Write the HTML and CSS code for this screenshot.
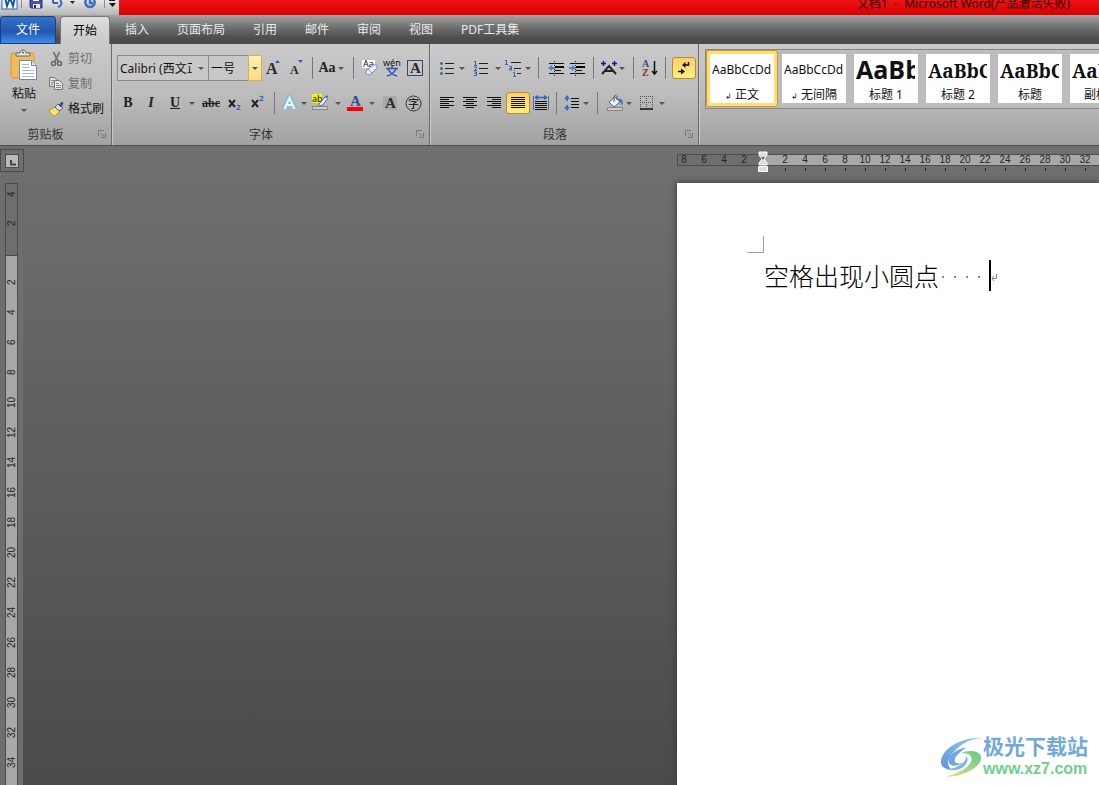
FILE: index.html
```html
<!DOCTYPE html>
<html lang="zh-CN">
<head>
<meta charset="utf-8">
<title>文档1 - Microsoft Word</title>
<link rel="stylesheet" href="styles.css">
</head>
<body>
<header class="titlebar">
  <div class="quick">
    <svg class="quick-icons" width="119" height="15" viewBox="0 0 119 15">
      <rect x="2" y="-6" width="15" height="15" fill="#f4f9ff" stroke="#2a6cb5"/>
      <path d="M5 -3l2 9 3-8 3 8 2-9" fill="none" stroke="#17599f" stroke-width="2"/>
      <path d="M21.500 0v8M104.500 0v8" stroke="#8b8b8b"/>
      <path d="M30 0h12v8H31l-1-1z" fill="#4c51b8" stroke="#2c3080"/>
      <path d="M33 0h6v1h-6z" fill="#fff"/><path d="M33 4h7v4h-7z" fill="#e6e9fa"/><path d="M34 5h2v3h-2z" fill="#20246a"/>
      <path d="M53 3h5M53 3v-3M60 0c3 3 1 6-2 7" fill="none" stroke="#3b67b8" stroke-width="2"/>
      <path d="M70 1h5l-2.500 3z" fill="#222"/>
      <path d="M86 0c-2 4 1 7 4 7s6-3 4-7M90 -1v4h3" fill="none" stroke="#3c6fc2" stroke-width="2.500"/>
      <path d="M109 .5h6" stroke="#111"/><path d="M109 3h7l-3.500 4z" fill="#111"/>
    </svg>
  </div>
  <div class="title">文档1 &nbsp;-&nbsp; Microsoft Word(产品激活失败)</div>
</header>

<nav class="tabs">
  <button class="tab file">文件</button>
  <button class="tab active">开始</button>
  <button class="tab">插入</button>
  <button class="tab">页面布局</button>
  <button class="tab">引用</button>
  <button class="tab">邮件</button>
  <button class="tab">审阅</button>
  <button class="tab">视图</button>
  <button class="tab">PDF工具集</button>
</nav>

<section class="ribbon">
  <div class="group clipboard">
    <div class="clip-body">
      <button class="paste">
        <svg width="28" height="32" viewBox="0 0 28 32">
          <rect x="1" y="3" width="23" height="25" rx="2" fill="#f0bb58" stroke="#d69a3a"/>
          <path d="M6 6V3h4c0-4 6-4 6 0h4v3z" fill="#e4e4e4" stroke="#666"/><circle cx="13" cy="2.500" r="1" fill="#555"/>
          <path d="M9.500 10.500h12l5 5v14h-17z" fill="#fff" stroke="#6d87b4"/><path d="M21.500 10.500v5h5" fill="#dbe6f7" stroke="#6d87b4"/>
          <path d="M12 14.500h7M12 17.500h7M12 20.500h12M12 23.500h12M12 26.500h12" stroke="#a9b3c4"/>
        </svg>
        <span>粘贴</span><i class="tri"></i>
      </button>
      <div class="clip-list">
        <button class="clip-item dim">
          <svg width="16" height="16" viewBox="0 0 16 16"><path d="M4.500 1l5 10M10.500 1l-5 10" stroke="#777" stroke-width="1.700"/><circle cx="4.500" cy="12.500" r="2" fill="none" stroke="#666" stroke-width="1.500"/><circle cx="10.500" cy="12.500" r="2" fill="none" stroke="#666" stroke-width="1.500"/></svg>
          <span>剪切</span></button>
        <button class="clip-item dim">
          <svg width="16" height="16" viewBox="0 0 16 16"><path d="M.5 1.500h5l2 2v7h-7z" fill="#ddd" stroke="#777"/><path d="M2 4.500h4M2 6.500h4M2 8.500h2" stroke="#888"/><path d="M5.500 4.500h5l3 3v6h-8z" fill="#e6e6e6" stroke="#777"/><path d="M7 7.500h3M7 9.500h5M7 11.500h5" stroke="#888"/></svg>
          <span>复制</span></button>
        <button class="clip-item">
          <svg width="16" height="16" viewBox="0 0 16 16"><path d="M0 9l6-3 5 4-5 5c-2 0-4-1-6-6z" fill="#f7d95a" stroke="#bb922a"/><path d="M2 10l5 3M4 8l5 4" stroke="#fff5ae"/><path d="M6 6l3-3 5 4-4 3z" fill="#d8d8e4" stroke="#666"/><path d="M10 4l3-3 1 1-2 4z" fill="#4d4f9f" stroke="#393b78"/></svg>
          <span>格式刷</span></button>
      </div>
    </div>
    <div class="caption"><span>剪贴板</span><svg class="launch" width="8" height="8" viewBox="0 0 8 8"><path d="M.5 6V.5H6M3 3l3 3M7.500 3v4.500H3" fill="none" stroke="#777"/></svg></div>
  </div>

  <div class="group font">
    <div class="row">
      <input class="combo name" aria-label="字体" value="Calibri (西文正文)"><button class="combo-arrow" aria-label="字体列表"><i class="tri"></i></button>
      <input class="combo size" aria-label="字号" value="一号"><button class="combo-arrow hot" aria-label="字号列表"><i class="tri"></i></button>
      <button class="tool w22" aria-label="增大字体"><svg width="16" height="18" viewBox="0 0 16 18"><text x="1" y="15" class="serif s16">A</text><path d="M10 4h5l-2.500-3z" fill="#2d5eb5"/></svg></button>
      <button class="tool w24" aria-label="缩小字体"><svg width="16" height="18" viewBox="0 0 16 18"><text x="2" y="15" class="serif s12">A</text><path d="M10 1h5l-2.500 3z" fill="#2d5eb5"/></svg></button>
      <i class="sep w8"></i>
      <button class="tool w22 letters">Aa</button><button class="tool w6" aria-label="更改大小写"><i class="tri"></i></button>
      <i class="sep w18"></i>
      <button class="tool w16" aria-label="清除格式"><svg width="16" height="18" viewBox="0 0 16 18"><rect x="0" y="1" width="13" height="8" fill="#fff"/><text x="1" y="8" class="sans s8">Aa</text><path d="M4 12l7-6c2-1 5 0 4 3l-6 6c-2 2-6 0-5-3z" fill="#e9effa" stroke="#6f86b6"/><path d="M6 10l4 4" stroke="#8ea4cc"/></svg></button>
      <button class="tool w28" aria-label="拼音指南"><svg width="18" height="18" viewBox="0 0 18 18"><text x="0" y="7" class="sans s8">wén</text><path d="M9 7v2M3 9.500h12M5 10c2 4 5 6 9 7M13 10c-2 4-5 6-9 7" fill="none" stroke="#2855b9" stroke-width="1.500"/></svg></button>
      <button class="tool w18" aria-label="字符边框"><svg width="17" height="18" viewBox="0 0 17 18"><rect x=".5" y="1.500" width="15" height="15" fill="#c6c6c6" stroke="#2d4a6d"/><text x="3" y="14" class="serif s15">A</text></svg></button>
    </div>
    <div class="row second">
      <button class="tool w22 letters bold">B</button>
      <button class="tool w24 letters italic">I</button>
      <button class="tool w24 letters under">U</button><button class="tool w10" aria-label="下划线选项"><i class="tri"></i></button>
      <button class="tool w28 letters strike">abc</button>
      <button class="tool w20" aria-label="下标"><svg width="16" height="16" viewBox="0 0 16 16"><path d="M2 5l6 7M8 5l-6 7" stroke="#222" stroke-width="2"/><text x="9" y="15" class="blue s7">2</text></svg></button>
      <button class="tool w24" aria-label="上标"><svg width="16" height="16" viewBox="0 0 16 16"><path d="M3 5l6 7M9 5l-6 7" stroke="#222" stroke-width="2"/><text x="10" y="6" class="blue s7">2</text></svg></button>
      <i class="sep w10"></i>
      <button class="tool w22" aria-label="文本效果"><svg width="18" height="18" viewBox="0 0 18 18"><path d="M3 15L8.500 3 14 15M5 11h7" fill="none" stroke="#79bde6" stroke-width="5" stroke-linejoin="round" opacity=".85"/><path d="M3.500 15L8.500 4l5 11M5 11h7" fill="none" stroke="#edf9ff" stroke-width="2"/></svg></button><button class="tool w6" aria-label="文本效果选项"><i class="tri"></i></button>
      <button class="tool w28" aria-label="突出显示"><svg width="18" height="18" viewBox="0 0 18 18"><rect x="0" y="0" width="10" height="9" fill="#f5f21b"/><text x="0" y="8" class="sans s8">ab</text><path d="M7 10l6-7 3 1-5 7-4 1z" fill="#dfe7f2" stroke="#5373a5"/><path d="M13 3l2-2 1 2z" fill="#3c5e9d"/><rect x=".5" y="12.500" width="15" height="3" fill="#ccc" stroke="#888"/></svg></button><button class="tool w6" aria-label="突出显示颜色"><i class="tri"></i></button>
      <button class="tool w28" aria-label="字体颜色"><svg width="18" height="18" viewBox="0 0 18 18"><text x="4" y="12" class="serif s15 navy">A</text><rect x="1" y="13" width="16" height="4" fill="#f00"/></svg></button><button class="tool w6" aria-label="字体颜色选项"><i class="tri"></i></button>
      <button class="tool w30" aria-label="字符底纹"><svg width="14" height="16" viewBox="0 0 14 16"><rect y="1" width="14" height="14" fill="#a9a9a9"/><text x="2" y="13" class="serif s15">A</text></svg></button>
      <button class="tool w16" aria-label="带圈字符"><svg width="17" height="17" viewBox="0 0 17 17"><circle cx="8.500" cy="8.500" r="7.500" fill="none" stroke="#333"/><text x="3" y="13" class="s11">字</text></svg></button>
    </div>
    <div class="caption"><span>字体</span><svg class="launch" width="8" height="8" viewBox="0 0 8 8"><path d="M.5 6V.5H6M3 3l3 3M7.500 3v4.500H3" fill="none" stroke="#777"/></svg></div>
  </div>

  <div class="group paragraph">
    <div class="row">
      <button class="tool w22" aria-label="项目符号"><svg width="16" height="16" viewBox="0 0 16 16"><path d="M6 3.500h9M6 8.500h9M6 13.500h9" stroke="#222"/><g fill="#5a7cbb" stroke="#244c94"><circle cx="2.500" cy="3.500" r="1"/><circle cx="2.500" cy="8.500" r="1"/><circle cx="2.500" cy="13.500" r="1"/></g></svg></button><button class="tool w8" aria-label="项目符号库"><i class="tri"></i></button>
      <button class="tool w30" aria-label="编号"><svg width="16" height="16" viewBox="0 0 16 16"><path d="M6 3.500h9M6 8.500h9M6 13.500h9" stroke="#222"/><path d="M1 1.500h1.500V6M1 5.500h3M1 7h2.500v1.500L1 10.500h3M1 12h2.500v3.500H1M2 13.500h1" fill="none" stroke="#2f62b5"/></svg></button><button class="tool w4" aria-label="编号库"><i class="tri"></i></button>
      <button class="tool w26" aria-label="多级列表"><svg width="18" height="18" viewBox="0 0 18 18"><path d="M7 3.500h10M10 9.500h7M13 14.500h4" stroke="#222"/><path d="M1 1.500h1.500V5M1 5.500h3M5 7.500h2.500V11H5.500V9.500H7M9 13.500h1.500V17M9 17.500h3M10 11.500h1" fill="none" stroke="#2f62b5"/></svg></button><button class="tool w4" aria-label="列表库"><i class="tri"></i></button>
      <i class="sep w16"></i>
      <button class="tool w20" aria-label="减少缩进"><svg width="16" height="16" viewBox="0 0 16 16"><path d="M1 3.500h15M7 10.500h6M1 13.500h15" stroke="#111"/><path d="M7 6h9v2H7z"/><path d="M6.500 1v15" stroke="#222" stroke-dasharray="1 1"/><path d="M0 8l4-3v2h3v2H4v2z" fill="#4f80d0"/></svg></button>
      <button class="tool w22" aria-label="增加缩进"><svg width="16" height="16" viewBox="0 0 16 16"><path d="M1 3.500h15M7 10.500h6M1 13.500h15" stroke="#111"/><path d="M7 6h9v2H7z"/><path d="M6.500 1v15" stroke="#222" stroke-dasharray="1 1"/><path d="M7 8L3 5v2H0v2h3v2z" fill="#4f80d0"/></svg></button>
      <i class="sep w10"></i>
      <button class="tool w22" aria-label="中文版式"><svg width="18" height="16" viewBox="0 0 18 16"><path d="M2 14L9 6l7 8M5 11h8" fill="none" stroke="#222" stroke-width="2"/><path d="M1 3.500h5M3.500 1v5M12 3.500h5M14.500 1v5" stroke="#15158e" stroke-width="1.500"/></svg></button><button class="tool w4" aria-label="版式选项"><i class="tri"></i></button>
      <i class="sep w18"></i>
      <button class="tool w16" aria-label="排序"><svg width="16" height="18" viewBox="0 0 16 18"><text x="0" y="8" class="serif s10 navy">A</text><text x="0" y="17" class="serif s10 wine">Z</text><path d="M12.500 2v13M10 12l2.500 3 2.500-3" fill="none" stroke="#111" stroke-width="1.500"/></svg></button>
      <i class="sep w14"></i>
      <button class="tool w24 on" aria-label="显示编辑标记"><svg width="16" height="16" viewBox="0 0 16 16"><path d="M12.500 2v3H9M2 11.500h4" fill="none" stroke="#111" stroke-width="1.500"/><path d="M9.500 2v6L6 5zM5 8.500v6l4-3z" fill="#111"/></svg></button>
    </div>
    <div class="row second">
      <button class="tool w22" aria-label="左对齐"><svg width="16" height="14" viewBox="0 0 16 14"><path d="M1 1.500h14M1 3.500h9M1 5.500h14M1 7.500h9M1 9.500h14M1 11.500h9" stroke="#111"/></svg></button>
      <button class="tool w24" aria-label="居中"><svg width="16" height="14" viewBox="0 0 16 14"><path d="M1 1.500h14M4 3.500h8M1 5.500h14M4 7.500h8M1 9.500h14M4 11.500h8" stroke="#111"/></svg></button>
      <button class="tool w24" aria-label="右对齐"><svg width="16" height="14" viewBox="0 0 16 14"><path d="M1 1.500h14M6 3.500h9M1 5.500h14M6 7.500h9M1 9.500h14M6 11.500h9" stroke="#111"/></svg></button>
      <button class="tool w24 on" aria-label="两端对齐"><svg width="16" height="14" viewBox="0 0 16 14"><path d="M1 1.500h14M1 3.500h14M1 5.500h14M1 7.500h14M1 9.500h14M1 11.500h14" stroke="#111"/></svg></button>
      <button class="tool w22" aria-label="分散对齐"><svg width="16" height="16" viewBox="0 0 16 16"><path d="M.5 1v14M15.500 1v14" stroke="#526b92"/><path d="M2 6.500h12M2 8.500h12M2 10.500h12M2 12.500h12M2 14.500h12" stroke="#111"/><path d="M3 2.500h10M5 .500L2.500 2.500 5 4.500M11 .500l2.500 2-2.500 2" fill="none" stroke="#2866bf" stroke-width="1.500"/></svg></button>
      <i class="sep w8"></i>
      <button class="tool w24" aria-label="行距"><svg width="16" height="16" viewBox="0 0 16 16"><path d="M7 3.500h8M7 6.500h8M7 9.500h8M7 12.500h8" stroke="#111"/><path d="M3 1v5M3 10v5" stroke="#3770c5" stroke-width="2"/><path d="M0 4l3-4 3 4zM0 12l3 4 3-4z" fill="#3770c5"/></svg></button><button class="tool w4" aria-label="行距选项"><i class="tri"></i></button>
      <i class="sep w18"></i>
      <button class="tool w18" aria-label="底纹"><svg width="17" height="16" viewBox="0 0 17 16"><path d="M8 2L2 7l5 5 6-5z" fill="#f0f5ff" stroke="#4d6486"/><path d="M7 7V2c0-2 3-2 3 0v3" fill="none" stroke="#555"/><path d="M11 4c4-1 6 2 4 7-1-3-1-4-3-4z" fill="#3b77c1"/><rect x=".5" y="12.500" width="15" height="3" fill="#ccc" stroke="#888"/></svg></button><button class="tool w10" aria-label="底纹颜色"><i class="tri"></i></button>
      <button class="tool w26" aria-label="边框"><svg width="14" height="14" viewBox="0 0 14 14"><path d="M.5 0v13M6.500 0v13M12.500 0v13M0 .5h13M0 6.500h13" stroke="#555" stroke-dasharray="1 1"/><path d="M0 13h13" stroke="#111" stroke-width="1.500"/></svg></button><button class="tool w4" aria-label="边框选项"><i class="tri"></i></button>
    </div>
    <div class="caption"><span>段落</span><svg class="launch" width="8" height="8" viewBox="0 0 8 8"><path d="M.5 6V.5H6M3 3l3 3M7.500 3v4.500H3" fill="none" stroke="#777"/></svg></div>
  </div>

  <div class="group styles">
    <div class="gallery">
      <button class="style chosen"><span class="sample">AaBbCcDd</span><span class="style-name"><small>↲</small> 正文</span></button>
      <button class="style"><span class="sample">AaBbCcDd</span><span class="style-name"><small>↲</small> 无间隔</span></button>
      <button class="style"><span class="sample h1">AaBbC</span><span class="style-name">标题 1</span></button>
      <button class="style"><span class="sample h2">AaBbCc</span><span class="style-name">标题 2</span></button>
      <button class="style"><span class="sample h2">AaBbCc</span><span class="style-name">标题</span></button>
      <button class="style"><span class="sample h2">AaBbCc</span><span class="style-name">副标题</span></button>
    </div>
  </div>
</section>

<main class="work">
  <aside class="side">
    <button class="tabstop" aria-label="制表符"><svg width="14" height="14" viewBox="0 0 14 14"><rect x=".5" y=".5" width="13" height="13" fill="#b9b9b9" stroke="#4c4c4c"/><path d="M6 6v4.500h5" fill="none" stroke="#444" stroke-width="2"/></svg></button>
    <div class="vruler">
      <div class="vmargin"><span>4</span><span>2</span></div>
      <div class="vbody"><span>2</span><span>4</span><span>6</span><span>8</span><span>10</span><span>12</span><span>14</span><span>16</span><span>18</span><span>20</span><span>22</span><span>24</span><span>26</span><span>28</span><span>30</span><span>32</span><span>34</span></div>
    </div>
  </aside>
  <div class="canvas">
    <div class="hruler">
      <div class="hmargin"><span>8</span><span>6</span><span>4</span><span>2</span></div>
      <div class="hbody"><span>2</span><span>4</span><span>6</span><span>8</span><span>10</span><span>12</span><span>14</span><span>16</span><span>18</span><span>20</span><span>22</span><span>24</span><span>26</span><span>28</span><span>30</span><span>32</span></div>
      <svg class="indent" width="10" height="22" viewBox="0 0 10 22"><path d="M1 1h8v3L6 8l3 4v2H1v-2l3-4-3-4z" fill="#ddd" stroke="#fff"/><path d="M3 6h4L5 9z" fill="#666"/><path d="M.5 15.500h9v5h-9z" fill="#ddd" stroke="#fff"/></svg>
    </div>
    <article class="page">
      <div class="corner"></div>
      <p class="line">空格出现小圆点<span class="dots"><i></i><i></i><i></i><i></i></span><span class="caret"></span><svg class="return" width="6" height="8" viewBox="0 0 6 8"><path d="M5.500 0v4.500H1M3 2L1 4.500 3 7" fill="none" stroke="#888"/></svg></p>
      <div class="mark">
        <svg width="44" height="42" viewBox="0 0 46 44">
          <defs>
            <linearGradient id="sky" x1="0" y1="1" x2="1" y2="0"><stop offset="0" stop-color="#5f93dc"/><stop offset="1" stop-color="#8ed0ea"/></linearGradient>
            <linearGradient id="leaf" x1="0" y1="1" x2="1" y2="0"><stop offset="0" stop-color="#e3e27c"/><stop offset="1" stop-color="#63c98b"/></linearGradient>
          </defs>
          <path d="M45 2C24 1 3 13 2 27c0 6 5 8 11 8-6-5-4-12 4-20C24 8 32 3 45 2z" fill="url(#sky)"/>
          <path d="M29 12c-9 1-19 7-19 14 0 6 8 7 15 2-7 2-10 0-8-5 2-4 7-8 12-11z" fill="#6fa6e2"/>
          <path d="M23 18c8-4 21-3 21 5 0 9-16 19-38 20 15-4 28-11 28-19 0-4-3-6-11-6z" fill="url(#leaf)"/>
          <path d="M26 21c4 1 2 5-2 8-5 4-11 6-18 5 9 4 20 1 23-6 2-4 1-7-3-7z" fill="#7db4e4"/>
        </svg>
        <div class="mark-text"><b>极光下载站</b><a href="#">www.xz7.com</a></div>
      </div>
    </article>
  </div>
</main>
</body>
</html>
```
FILE: styles.css
```css
* { box-sizing: border-box; }
body {
  margin: 0;
  height: 100vh;
  display: flex;
  flex-direction: column;
  overflow: hidden;
  font: 12px/16px "Noto Sans", "Noto Sans CJK SC", sans-serif;
  color: #111;
}
button, input {
  font: inherit;
  color: inherit;
  margin: 0;
  padding: 0;
  border: 0;
  background: none;
}
svg { flex: none; display: block; overflow: visible; }

.titlebar {
  height: 15px;
  flex: none;
  display: flex;
  justify-content: space-between;
  align-items: flex-end;
  overflow: hidden;
  background: linear-gradient(#ee1414, #d90000);
}
.quick {
  width: 119px;
  height: 15px;
  background: linear-gradient(#e6e6e6, #b5b5b5);
}
.quick-icons { overflow: hidden; }
.title { padding-right: 29px; height: 19px; color: #2b0000; }

.tabs {
  height: 29px;
  flex: none;
  display: flex;
  padding-top: 1px;
  background: linear-gradient(#a4a4a4, #6d6d6d 45%, #4d4d4d 80%, #4d4d4d);
}
.tab { padding: 0 14px; color: #e9e9e9; white-space: nowrap; }
.file {
  width: 56px;
  margin-right: 4px;
  border: 1px solid #183f87;
  border-radius: 3px 3px 0 0;
  background: linear-gradient(#3673c8, #2057b0 55%, #3e8be8);
  color: #fff;
}
.active {
  width: 50px;
  padding: 0;
  margin-right: 1px;
  border: 1px solid #777;
  border-bottom: 0;
  border-radius: 4px 4px 0 0;
  background: linear-gradient(#dedede, #c8c8c8);
  color: #000;
}

.ribbon {
  height: 102px;
  flex: none;
  display: flex;
  background: linear-gradient(#cacaca, #bcbcbc 50%, #a2a2a2);
  border-bottom: 1px solid #4c4c4c;
  overflow: hidden;
}
.group {
  flex: none;
  display: flex;
  flex-direction: column;
  padding-top: 7px;
  border-right: 1px solid #6a6a6a;
  box-shadow: 1px 0 #cacaca;
}
.clipboard { width: 112px; padding-top: 3px; }
.font { width: 318px; padding-left: 5px; }
.paragraph { width: 269px; padding-left: 6px; }
.row { height: 34px; display: flex; align-items: center; }
.second { height: 36px; }
.caption {
  height: 20px;
  margin-top: 4px;
  display: flex;
  align-items: center;
  justify-content: center;
  color: #333;
  position: relative;
}
.font .caption { padding-right: 24px; }
.paragraph .caption { padding-right: 24px; }
.clipboard .caption { padding-right: 20px; }
.launch { position: absolute; right: 5px; top: 5px; }

.clip-body { display: flex; height: 74px; }
.paste {
  width: 48px;
  display: flex;
  flex-direction: column;
  align-items: center;
  justify-content: flex-start;
  padding-top: 3px;
}
.paste span { margin: 4px 0 7px; }
.clip-list { display: flex; flex-direction: column; }
.clip-item { height: 25px; display: flex; align-items: center; gap: 3px; padding-left: 1px; white-space: nowrap; }
.dim { color: #6e6e6e; }

.tri {
  flex: none;
  display: block;
  width: 0;
  border: solid transparent;
  border-width: 3px 3px 0;
  border-top-color: #555;
}
.tool { height: 22px; flex: none; display: flex; align-items: center; justify-content: center; }
.on { border: 1px solid #c08a2a; border-radius: 3px; background: linear-gradient(#fbcf6b, #fff07c); }
.sep { flex: none; height: 22px; background: linear-gradient(#777, #777) center / 1px 100% no-repeat; }
.w4 { width: 4px; }
.w6 { width: 6px; }
.w8 { width: 8px; }
.w10 { width: 10px; }
.w14 { width: 14px; }
.w16 { width: 16px; }
.w18 { width: 18px; }
.w20 { width: 20px; }
.w22 { width: 22px; }
.w24 { width: 24px; }
.w26 { width: 26px; }
.w28 { width: 28px; }
.w30 { width: 30px; }

.combo {
  height: 26px;
  border: 1px solid #8a8a8a;
  border-right: 0;
  padding: 0 2px;
  background: #c8c8c8;
}
.name { width: 77px; }
.size { width: 40px; }
.combo-arrow {
  width: 14px;
  height: 26px;
  display: flex;
  align-items: center;
  justify-content: center;
  border: solid #8a8a8a;
  border-width: 1px 0;
  background: #c8c8c8;
}
.hot { border: 1px solid #e0b040; background: linear-gradient(#fdf0b8, #fbdc80); }

.letters { font: bold 14px/20px "Liberation Serif", serif; color: #222; }
.italic { font-style: italic; }
.under { text-decoration: underline; }
.strike { font-size: 12px; text-decoration: line-through; }
.serif { font-family: "Liberation Serif", serif; font-weight: bold; fill: #2b2b2b; }
.sans { font-family: "Noto Sans", sans-serif; fill: #111; }
.blue { font-family: "DejaVu Sans", sans-serif; font-weight: bold; fill: #2f62b5; }
.navy { fill: #2c4f94; }
.wine { fill: #9c2b2b; }
.s7 { font-size: 7px; }
.s8 { font-size: 9px; }
.s10 { font-size: 10px; }
.s11 { font-size: 11px; }
.s12 { font-size: 12px; }
.s15 { font-size: 15px; }
.s16 { font-size: 16px; }

.styles { flex: 1; min-width: 0; padding: 5px 0 0 6px; border: 0; box-shadow: none; }
.gallery {
  display: flex;
  height: 60px;
  border: 1px solid #858585;
  border-right: 0;
  background: #bcbcbc;
  overflow: hidden;
}
.style {
  width: 72px;
  height: 57px;
  flex: none;
  padding: 4px;
  display: flex;
  flex-direction: column;
  align-items: stretch;
  background: #fff content-box;
}
.chosen {
  padding: 3px;
  border: 1px solid #c9963c;
  border-radius: 3px;
  background: linear-gradient(#fff, #fff) content-box, #ffdf70;
}
.sample { height: 32px; margin: 0 3px 0 2px; line-height: 32px; text-align: left; overflow: hidden; white-space: nowrap; }
.h1 { font: bold 25px/30px "Open Sans", sans-serif; }
.h2 { font: bold 19px/34px "Noto Serif", "Liberation Serif", serif; }
.style-name { height: 17px; line-height: 17px; white-space: nowrap; text-align: center; }
.style-name small { font-size: 8px; }

.work { flex: 1; min-height: 0; display: flex; background: linear-gradient(#707070, #4a4a4a); }
.side { width: 24px; flex: none; display: flex; flex-direction: column; background: linear-gradient(#6e6e6e, #6e6e6e) 0 0 / 23px 100% no-repeat; padding-top: 3px; overflow: hidden; }
.tabstop {
  width: 24px;
  height: 23px;
  flex: none;
  display: flex;
  align-items: center;
  justify-content: center;
  border: 1px solid #4c4c4c;
}
.vruler { flex: 1; min-height: 0; overflow: hidden; margin: 11px 5px 0; width: 13px; border: 1px solid #4c4c4c; border-bottom: 0; background: #a8a8a8; font: 10px/11px "Liberation Sans", sans-serif; color: #222; }
.vmargin { height: 72px; background: #6e6e6e; border-bottom: 1px solid #4c4c4c; }
.vruler span { height: 30px; display: flex; align-items: center; justify-content: center; writing-mode: vertical-rl; transform: rotate(180deg); }
.vmargin span:first-child { height: 20px; margin-bottom: 4px; }
.vbody { padding-top: 11px; }
.canvas { flex: 1; min-width: 0; display: flex; flex-direction: column; padding-left: 653px; overflow: hidden; }
.hruler {
  flex: none;
  margin-top: 8px;
  height: 12px;
  display: flex;
  position: relative;
  border: 1px solid #4c4c4c;
  border-right: 0;
  background: #a8a8a8;
  font: 10px/10px "Liberation Sans", sans-serif;
  color: #222;
}
.hruler span { width: 20px; flex: none; text-align: center; }
.hmargin { width: 86px; flex: none; display: flex; padding-right: 10px; background: #6e6e6e; }
.hmargin span:first-child { width: 12px; margin-right: 4px; }
.hbody { flex: 1; min-width: 0; display: flex; padding-left: 11px; }
.hbody span { height: 16px; background: linear-gradient(#222, #222) center bottom / 1px 3px no-repeat; }
.indent { position: absolute; left: 80px; top: -4px; }
.page {
  flex: 1;
  margin-top: 17px;
  padding: 53px 0 0 70px;
  position: relative;
  background: #fff;
  box-shadow: 0 0 6px #333;
}
.corner { width: 17px; height: 17px; border: solid #a4a4a4; border-width: 0 1px 1px 0; }
.line {
  margin: 6px 0 0 17px;
  height: 36px;
  display: flex;
  align-items: center;
  font: 300 25px/30px "Noto Sans CJK SC", sans-serif;
  color: #000;
  white-space: nowrap;
  height: 32px;
}
.dots { display: flex; gap: 10px; padding: 4px 9px 0 3px; }
.dots i { width: 2px; height: 2px; background: #888; }
.caret { width: 2px; height: 31px; background: #000; }
.return { margin-top: 6px; }
.mark { position: absolute; right: 11px; bottom: 6px; display: flex; align-items: center; }
.mark-text { display: flex; flex-direction: column; font-family: "Liberation Sans", "Noto Sans CJK SC", sans-serif; }
.mark-text b { font-size: 21px; line-height: 24px; color: #72a9dc; }
.mark-text a { font-size: 16px; line-height: 20px; font-weight: bold; color: #6fcf8d; text-decoration: none; }
```
